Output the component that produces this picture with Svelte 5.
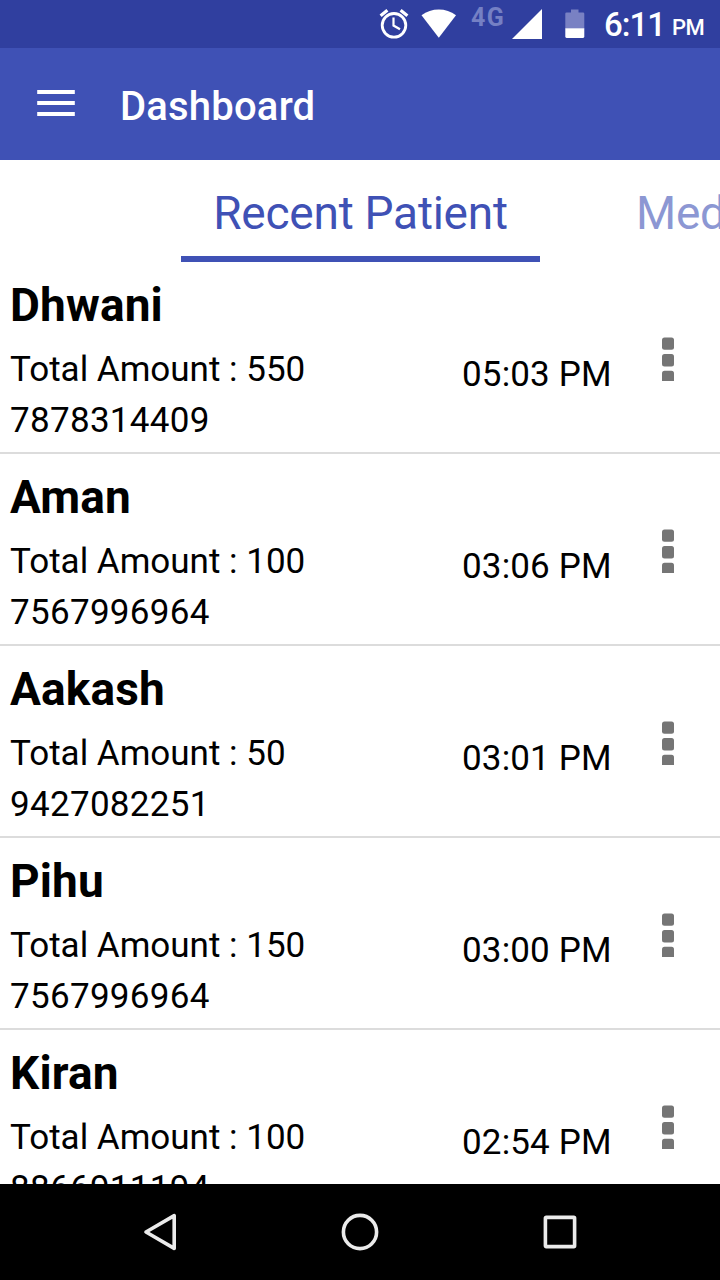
<script lang="ts">
  interface Patient {
    name: string;
    amount: number;
    phone: string;
    time: string;
  }

  const patients: Patient[] = [
    { name: 'Dhwani', amount: 550, phone: '7878314409', time: '05:03 PM' },
    { name: 'Aman', amount: 100, phone: '7567996964', time: '03:06 PM' },
    { name: 'Aakash', amount: 50, phone: '9427082251', time: '03:01 PM' },
    { name: 'Pihu', amount: 150, phone: '7567996964', time: '03:00 PM' },
    { name: 'Kiran', amount: 100, phone: '8866911194', time: '02:54 PM' },
  ];
</script>

<div class="screen">
  <!-- Status bar -->
  <div class="status">
    <svg class="alarm" width="30" height="32" viewBox="0 0 30 32" fill="none" stroke="#fff">
      <circle cx="15" cy="17.3" r="11.8" stroke-width="2.8" />
      <path d="M1.6 7.8 8.4 2.2M28.4 7.8 21.6 2.2" stroke-width="3.2" />
      <path d="M14.5 9.5V17.5L21 21.3" stroke-width="2.2" />
    </svg>
    <svg class="wifi" width="36" height="30" viewBox="0 0 36 30">
      <path d="M0.5 6.3C5.5 2.3 11.5 0.4 17.8 0.4S30 2.3 35 6.3L17.8 28.8Z" fill="#fff" />
    </svg>
    <span class="network">4G</span>
    <svg class="signal" width="30" height="30" viewBox="0 0 30 30">
      <path d="M0 30H30V0Z" fill="#fff" />
    </svg>
    <svg class="battery" width="20" height="30" viewBox="0 0 20 30">
      <path d="M6 0.4H13.5V3.4H18Q19.3 3.4 19.3 4.7V19.5H0.3V4.7Q0.3 3.4 1.6 3.4H6Z" fill="#7981c3" />
      <path d="M0.3 19.2H19.3V27.6Q19.3 28.9 18 28.9H1.6Q0.3 28.9 0.3 27.6Z" fill="#fff" />
    </svg>
    <span class="clock">6:11</span>
    <span class="meridiem">PM</span>
  </div>

  <!-- App bar -->
  <header class="appbar">
    <svg width="38" height="28" viewBox="0 0 38 28" fill="#fff">
      <rect x="0.2" y="1" width="37.6" height="4" />
      <rect x="0.2" y="12" width="37.6" height="4" />
      <rect x="0.2" y="23" width="37.6" height="4" />
    </svg>
    <h1>Dashboard</h1>
  </header>

  <nav class="tabs">
    <span class="tab active">Recent Patient</span>
    <span class="tab next">Medicine</span>
  </nav>

  <!-- Patient list -->
  <main class="list">
    {#each patients as patient}
      <article class="row">
        <div class="info">
          <h2>{patient.name}</h2>
          <p class="amount">Total Amount : {patient.amount}</p>
          <p class="phone">{patient.phone}</p>
        </div>
        <span class="time">{patient.time}</span>
        <svg class="more" width="12" height="44" viewBox="0 0 12 44" fill="#757575">
          <rect y="0.4" width="12" height="12.4" rx="2.5" />
          <rect y="17" width="12" height="12.4" rx="2.5" />
          <path d="M0 44V36.3Q0 33.8 2.5 33.8H9.5Q12 33.8 12 36.3V44Z" />
        </svg>
      </article>
    {/each}
  </main>

  <!-- Navigation bar -->
  <footer class="navbar">
    <svg width="40" height="40" viewBox="0 0 40 40">
      <path d="M6 20 34.2 3.6V36.4Z" />
    </svg>
    <svg width="40" height="40" viewBox="0 0 40 40">
      <circle cx="20" cy="20" r="16.6" />
    </svg>
    <svg width="40" height="40" viewBox="0 0 40 40">
      <rect x="5.4" y="5.4" width="29.2" height="29.2" rx="0.8" />
    </svg>
  </footer>
</div>

<style>
  :global(body) {
    margin: 0;
    background: #fff;
  }

  .screen {
    display: flex;
    flex-direction: column;
    width: 720px;
    height: 1280px;
    overflow: hidden;
    background: #fff;
    color: #000;
    font-family: Roboto, sans-serif;
  }

  h1,
  h2,
  p {
    margin: 0;
  }

  svg {
    display: block;
    flex-shrink: 0;
  }

  /* Status bar */
  .status {
    display: flex;
    align-items: flex-start;
    flex-shrink: 0;
    box-sizing: border-box;
    height: 48px;
    padding-left: 379px;
    background: #303f9f;
    color: #fff;
    font-weight: 500;
    white-space: nowrap;
  }

  .alarm {
    margin-top: 8px;
  }

  .wifi {
    margin: 9px 0 0 12px;
  }

  .network {
    width: 41px;
    margin: 3px 0 0 14px;
    box-sizing: border-box;
    color: #7580c4;
    font-size: 25px;
    line-height: 30px;
    font-weight: 700;
    letter-spacing: 1.3px;
  }

  .signal {
    margin-top: 9px;
  }

  .battery {
    margin: 9px 0 0 23px;
  }

  .clock {
    width: 67px;
    margin: 5px 0 0 19px;
    font-size: 33px;
    line-height: 40px;
    letter-spacing: -1px;
  }

  .meridiem {
    margin: 12px 0 0 1px;
    font-size: 22px;
    line-height: 32px;
    letter-spacing: -0.6px;
  }

  /* App bar */
  .appbar {
    display: flex;
    align-items: center;
    flex-shrink: 0;
    box-sizing: border-box;
    height: 112px;
    padding-left: 37px;
    gap: 45px;
    background: #3f51b5;
    color: #fff;
  }

  .appbar svg {
    margin-bottom: 2px;
  }

  h1 {
    padding-top: 6px;
    font-size: 40px;
    line-height: 48px;
    font-weight: 500;
    letter-spacing: 0.2px;
  }

  /* Tabs */
  .tabs {
    display: flex;
    flex-shrink: 0;
    box-sizing: border-box;
    height: 102px;
    padding-left: 181px;
    overflow: hidden;
    color: #3f51b5;
    font-size: 46px;
    line-height: 54px;
    letter-spacing: -0.25px;
    white-space: nowrap;
  }

  .tab {
    flex-shrink: 0;
    box-sizing: border-box;
    padding-top: 26px;
  }

  .active {
    width: 359px;
    border-bottom: 6px solid #3f51b5;
    text-align: center;
  }

  .next {
    padding-left: 96px;
    color: #8c97d3;
  }

  /* Patient list */
  .list {
    flex: 1;
    min-height: 0;
    overflow: hidden;
  }

  .row {
    display: flex;
    align-items: flex-start;
    box-sizing: border-box;
    height: 192px;
    padding: 16px 0 0 10px;
    border-bottom: 2px solid #dcdcdc;
    font-size: 35px;
    line-height: 42px;
    white-space: nowrap;
  }

  .info {
    width: 452px;
  }

  h2 {
    font-size: 46px;
    line-height: 54px;
    font-weight: 700;
    letter-spacing: 0.15px;
  }

  .amount {
    margin-top: 17px;
  }

  .phone {
    margin-top: 9px;
    letter-spacing: 0.3px;
  }

  .time {
    width: 200px;
    margin-top: 76px;
    letter-spacing: 0.15px;
  }

  .more {
    margin-top: 59px;
  }

  /* Navigation bar */
  .navbar {
    display: flex;
    align-items: center;
    justify-content: center;
    flex-shrink: 0;
    gap: 160px;
    height: 96px;
    background: #000;
  }

  .navbar svg {
    fill: none;
    stroke: #ebebeb;
    stroke-width: 3.6;
    stroke-linejoin: round;
  }
</style>
